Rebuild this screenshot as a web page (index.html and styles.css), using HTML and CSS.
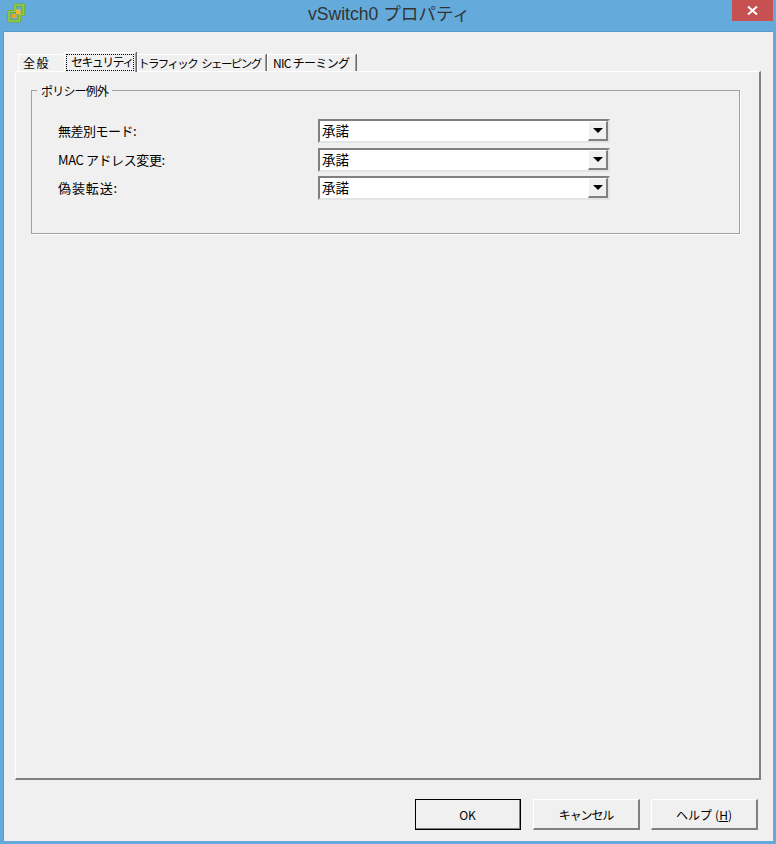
FILE: index.html
```html
<!DOCTYPE html>
<html lang="ja">
<head>
    <meta charset="UTF-8">
    <title>vSwitch0 プロパティ</title>
    <link rel="stylesheet" href="styles.css">
</head>
<body>
    <div class="window">
        <div class="titlebar">
            <svg class="app-icon" width="20" height="20" viewBox="0 0 20 20">
                <path d="M9 2h8.500v9.500h-4v6.500h-10.500v-9.500h6z" fill="none" stroke="#6aa832" stroke-width="3.200" stroke-linejoin="round"/>
                <path d="M9 2h8.500v9.500h-4v6.500h-10.500v-9.500h6z" fill="none" stroke="#97cc4e" stroke-width="1.600" stroke-linejoin="round"/>
                <rect x="6" y="11" width="4.500" height="4" fill="#eea515"/>
                <rect x="10" y="6.500" width="4.500" height="4.500" fill="#f6b92c"/>
            </svg>
            <div class="title">vSwitch0 プロパティ</div>
            <div class="close-btn">
                <svg width="11" height="9" viewBox="0 0 11 9">
                    <path d="M1 0.500l9 8M10 0.500l-9 8" stroke="#fff" stroke-width="2" fill="none"/>
                </svg>
            </div>
        </div>
        <div class="client">
            <div class="tabs">
                <div class="tab tab-general">全般</div>
                <div class="tab tab-active"><span class="focus-ring">セキュリティ</span></div>
                <div class="tab tab-traffic">トラフィック シェーピング</div>
                <div class="tab tab-nic">NIC チーミング</div>
            </div>
            <div class="panel">
                <div class="group">
                    <div class="group-title">ポリシー例外</div>
                    <div class="form-row">
                        <label class="label-promisc">無差別モード:</label>
                        <div class="combo"><span class="combo-text">承諾</span><span class="combo-btn"><i class="arrow"></i></span></div>
                    </div>
                    <div class="form-row">
                        <label class="label-mac">MAC アドレス変更:</label>
                        <div class="combo"><span class="combo-text">承諾</span><span class="combo-btn"><i class="arrow"></i></span></div>
                    </div>
                    <div class="form-row">
                        <label class="label-forged">偽装転送:</label>
                        <div class="combo"><span class="combo-text">承諾</span><span class="combo-btn"><i class="arrow"></i></span></div>
                    </div>
                </div>
            </div>
            <div class="buttons">
                <button class="btn btn-default">OK</button>
                <button class="btn btn-cancel">キャンセル</button>
                <button class="btn btn-help">ヘルプ (<u>H</u>)</button>
            </div>
        </div>
    </div>
</body>
</html>
```

FILE: styles.css
```css
html, body {
    margin: 0;
    padding: 0;
}
body {
    font-family: "Noto Sans CJK JP", "Liberation Sans", sans-serif;
    font-size: 12px;
    color: #000;
}
.window {
    width: 776px;
    height: 844px;
    box-sizing: border-box;
    padding: 0 3px 3px;
    background-color: #64abdc;
    display: flex;
    flex-direction: column;
    overflow: hidden;
}
.titlebar {
    height: 31px;
    flex: none;
    position: relative;
    display: flex;
    justify-content: center;
}
.app-icon {
    position: absolute;
    left: 3px;
    top: 3px;
}
.title {
    font-family: "Liberation Sans", "Noto Sans CJK JP", sans-serif;
    font-size: 17.600px;
    line-height: 29px;
    color: #333;
    padding-left: 2px;
}
.close-btn {
    position: absolute;
    right: 0;
    top: 0;
    width: 41px;
    height: 21px;
    background-color: #c75050;
    display: flex;
    align-items: center;
    justify-content: center;
}
.client {
    flex: 1;
    display: flex;
    flex-direction: column;
    background-color: #f0f0f0;
    padding: 21px 12px 11px;
    box-shadow: inset 1px 1px 0 #5a9bcb;
}
.tabs {
    display: flex;
    height: 19px;
    align-items: flex-end;
    padding-left: 3px;
    position: relative;
    z-index: 1;
}
.tab {
    box-sizing: border-box;
    height: 17px;
    padding: 0 0 0 5px;
    line-height: 16px;
    white-space: nowrap;
    border-top: 1px solid #fff;
    border-left: 1px solid #fff;
    border-right: 1px solid #a0a0a0;
    box-shadow: 1px 0 0 #696969;
}
.tab-general {
    width: 45px;
    padding-left: 4px;
    letter-spacing: 1.500px;
    border-right: 0;
    box-shadow: none;
}
.tab-active {
    width: 72px;
    height: 20px;
    margin-bottom: -1px;
    margin-left: 1px;
    padding: 1px 1px 0 1px;
    background-color: #f0f0f0;
    letter-spacing: -1.600px;
}
.focus-ring {
    display: block;
    height: 17px;
    line-height: 16px;
    padding-left: 5px;
    outline: 1px dotted #000;
    outline-offset: -1px;
}
.tab-traffic {
    width: 129px;
    margin-left: 1px;
    padding-left: 0;
    font-size: 11.500px;
    letter-spacing: -1.600px;
    word-spacing: 3px;
}
.tab-nic {
    width: 89px;
    margin-left: 1px;
    padding-left: 5px;
    letter-spacing: -0.700px;
}
.panel {
    flex: 1;
    box-sizing: border-box;
    padding: 18px 19px 0 15px;
    border-top: 1px solid #fff;
    border-left: 1px solid #fff;
    border-right: 2px solid #808080;
    border-bottom: 2px solid #808080;
}
.group {
    height: 144px;
    box-sizing: border-box;
    border: 1px solid #a0a0a0;
    box-shadow: 1px 1px 0 #fff;
    padding: 20px 0 0 26px;
    position: relative;
}
.group-title {
    position: absolute;
    left: 5px;
    top: -8px;
    padding: 0 4px;
    background-color: #f0f0f0;
    line-height: 16px;
    letter-spacing: -0.800px;
}
.form-row {
    display: flex;
    align-items: center;
    height: 24px;
    margin-top: 4px;
}
.form-row:nth-of-type(2) {
    margin-top: 8px;
}
.form-row:nth-of-type(3) {
    margin-top: 5px;
}
.form-row label {
    width: 260px;
    padding-bottom: 2px;
    font-size: 13px;
    white-space: nowrap;
}
.label-promisc {
    letter-spacing: -0.500px;
}
.label-mac {
    letter-spacing: -0.400px;
}
.label-forged {
    letter-spacing: 0.900px;
}
.combo {
    width: 292px;
    height: 24px;
    box-sizing: border-box;
    display: flex;
    background-color: #fff;
    border-top: 2px solid #808080;
    border-left: 2px solid #808080;
    border-right: 2px solid #e4e4e4;
    border-bottom: 2px solid #e4e4e4;
}
.combo-text {
    flex: 1;
    padding-left: 2px;
    font-size: 13.500px;
    line-height: 19px;
}
.combo-btn {
    width: 20px;
    box-sizing: border-box;
    background-color: #f0f0f0;
    border-top: 1px solid #fff;
    border-left: 1px solid #fff;
    border-right: 2px solid #808080;
    border-bottom: 2px solid #808080;
    display: flex;
    align-items: center;
    justify-content: center;
}
.arrow {
    width: 0;
    height: 0;
    border-left: 5px solid transparent;
    border-right: 5px solid transparent;
    border-top: 5px solid #000;
}
.buttons {
    display: flex;
    justify-content: flex-end;
    gap: 12px;
    padding: 19px 3px 0 0;
}
.btn {
    width: 107px;
    height: 31px;
    box-sizing: border-box;
    margin: 0;
    padding: 0;
    font-family: inherit;
    font-size: 12px;
    color: #000;
    background-color: #f0f0f0;
    border-top: 1px solid #fff;
    border-left: 1px solid #fff;
    border-right: 2px solid #808080;
    border-bottom: 2px solid #808080;
}
.btn-default {
    width: 106px;
    outline: 1px solid #000;
    outline-offset: -1px;
}
.btn-cancel {
    letter-spacing: -1.100px;
}
.btn-help {
    margin-left: -1px;
    letter-spacing: 0.100px;
}
```
